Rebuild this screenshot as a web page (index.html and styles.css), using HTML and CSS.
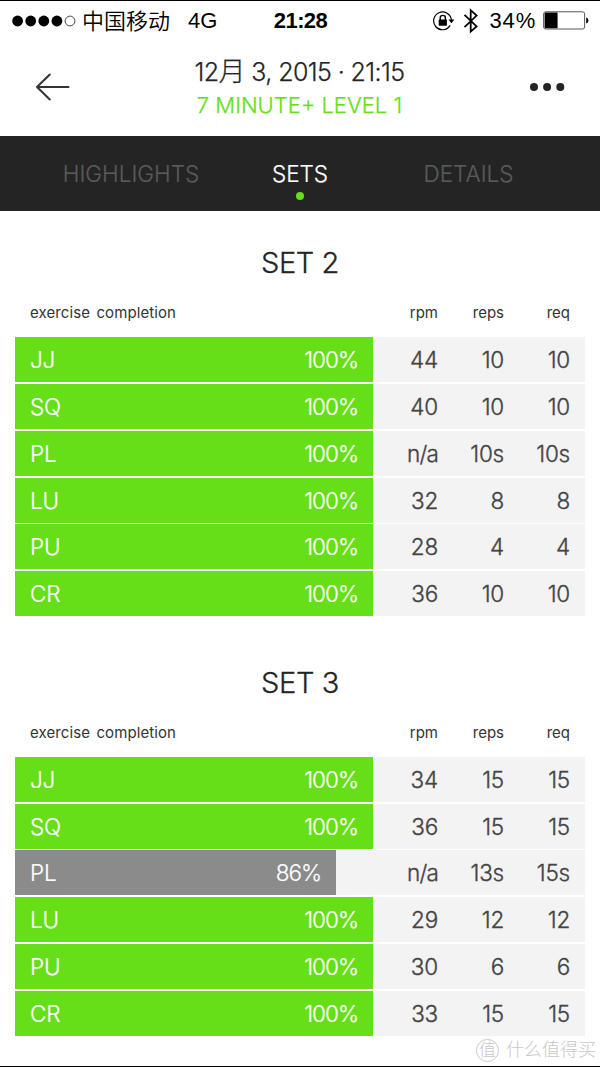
FILE: index.html
```html
<!DOCTYPE html>
<html lang="en">
<head>
    <meta charset="utf-8">
    <title>Workout sets</title>
    <link rel="stylesheet" href="styles.css">
</head>

<body>
    <div class="status">
        <div class="status-left">
            <svg class="signal" width="64" height="12" viewBox="0 0 64 12">
                <circle cx="5.6" cy="6" r="5.4"/>
                <circle cx="18.7" cy="6" r="5.4"/>
                <circle cx="31.8" cy="6" r="5.4"/>
                <circle cx="44.9" cy="6" r="5.4"/>
                <circle cx="58" cy="6" r="4.9" fill="none" stroke="#333" stroke-width="0.9"/>
            </svg>
            <span class="carrier">中国移动</span>
            <span class="network">4G</span>
        </div>
        <div class="clock">21:28</div>
        <div class="status-right">
            <svg class="lock" width="22" height="20" viewBox="0 0 22 20">
                <path d="M17.2 14.4A8.9 8.9 0 1 1 18.4 9" fill="none" stroke="#000" stroke-width="1.2"/>
                <path d="M15.4 8.6h6l-3 3.6z"/>
                <path d="M7.2 9V7a2.6 2.6 0 0 1 5.2 0v2" fill="none" stroke="#000" stroke-width="1.4"/>
                <rect x="5.7" y="8.5" width="8.2" height="6.2" rx="0.6"/>
            </svg>
            <svg class="bluetooth" width="16" height="26" viewBox="0 0 16 26">
                <path d="M1.5 6.8L13.6 18.4L7.7 23.6V2.2L13.6 7.6L1.5 19.2" fill="none" stroke="#000" stroke-width="1.8"/>
            </svg>
            <span class="percent">34%</span>
            <svg class="battery" width="46" height="19" viewBox="0 0 46 19">
                <rect x="0.6" y="0.8" width="41" height="17.2" rx="2" fill="none" stroke="#444" stroke-width="0.9"/>
                <rect x="1.6" y="1.6" width="13" height="15.6" rx="0.8"/>
                <path d="M43.2 6.5q2.2 0.6 2.2 3t-2.2 3z"/>
            </svg>
        </div>
    </div>

    <div class="header">
        <svg class="back" width="35" height="28" viewBox="0 0 35 28">
            <path d="M33.5 14H2M14.8 1.5L2 14l12.8 12.5" fill="none" stroke="#333" stroke-width="2" stroke-linecap="round" stroke-linejoin="round"/>
        </svg>
        <div class="title">
            <div class="date">12<span class="month">月</span> 3, 2015 · 21:15</div>
            <div class="workout">7 MINUTE+ LEVEL 1</div>
        </div>
        <svg class="more" width="36" height="10" viewBox="0 0 36 10">
            <circle cx="5" cy="5" r="4"/>
            <circle cx="18.1" cy="5" r="4"/>
            <circle cx="31.3" cy="5" r="4"/>
        </svg>
    </div>

    <div class="tabs">
        <div class="tab highlights"><span>HIGHLIGHTS</span></div>
        <div class="tab sets active"><span>SETS</span></div>
        <div class="tab details"><span>DETAILS</span></div>
    </div>

    <div class="set">
        <h2>SET 2</h2>
        <div class="labels"><span class="completion">exercise completion</span><span>rpm</span><span>reps</span><span>req</span></div>
        <div class="rows">
            <div class="row"><div class="track"><div class="bar"><span>JJ</span><span class="pct">100%</span></div></div><span>44</span><span>10</span><span>10</span></div>
            <div class="row"><div class="track"><div class="bar"><span>SQ</span><span class="pct">100%</span></div></div><span>40</span><span>10</span><span>10</span></div>
            <div class="row"><div class="track"><div class="bar"><span>PL</span><span class="pct">100%</span></div></div><span class="na">n/a</span><span>10s</span><span>10s</span></div>
            <div class="row"><div class="track"><div class="bar"><span>LU</span><span class="pct">100%</span></div></div><span>32</span><span>8</span><span>8</span></div>
            <div class="row"><div class="track"><div class="bar"><span>PU</span><span class="pct">100%</span></div></div><span>28</span><span>4</span><span>4</span></div>
            <div class="row"><div class="track"><div class="bar"><span>CR</span><span class="pct">100%</span></div></div><span>36</span><span>10</span><span>10</span></div>
        </div>
    </div>

    <div class="set">
        <h2>SET 3</h2>
        <div class="labels"><span class="completion">exercise completion</span><span>rpm</span><span>reps</span><span>req</span></div>
        <div class="rows">
            <div class="row"><div class="track"><div class="bar"><span>JJ</span><span class="pct">100%</span></div></div><span>34</span><span>15</span><span>15</span></div>
            <div class="row"><div class="track"><div class="bar"><span>SQ</span><span class="pct">100%</span></div></div><span>36</span><span>15</span><span>15</span></div>
            <div class="row"><div class="track"><div class="bar partial" style="width: 89.7%"><span>PL</span><span class="pct">86%</span></div></div><span class="na">n/a</span><span>13s</span><span>15s</span></div>
            <div class="row"><div class="track"><div class="bar"><span>LU</span><span class="pct">100%</span></div></div><span>29</span><span>12</span><span>12</span></div>
            <div class="row"><div class="track"><div class="bar"><span>PU</span><span class="pct">100%</span></div></div><span>30</span><span>6</span><span>6</span></div>
            <div class="row"><div class="track"><div class="bar"><span>CR</span><span class="pct">100%</span></div></div><span>33</span><span>15</span><span>15</span></div>
        </div>
    </div>

    <div class="watermark"><span class="stamp">值</span><span>什么值得买</span></div>
</body>
</html>
```

FILE: styles.css
```css
* {
    box-sizing: border-box;
}

body {
    position: relative;
    margin: 0;
    height: 1067px;
    overflow: hidden;
    background-color: #fff;
    border-top: 1px solid #000;
    border-bottom: 1px solid #000;
    font-family: Inter, "Noto Sans CJK SC", sans-serif;
    font-weight: 300;
    color: #242424;
}

/* phone status bar */
.status {
    display: grid;
    grid-template-columns: 1fr 60px 1fr;
    align-items: center;
    height: 38px;
    padding: 0 11px 0 12px;
    font-family: "Liberation Sans", "Noto Sans CJK SC", sans-serif;
    font-size: 22px;
    font-weight: 400;
    line-height: 38px;
    color: #000;
}

.status-left,
.status-right {
    display: flex;
    align-items: center;
}

.status-right {
    justify-content: flex-end;
}

.carrier {
    margin: -4px 0 0 6px;
    font-family: "Noto Sans CJK SC", sans-serif;
    font-weight: 350;
}

.network {
    margin: 1px 0 0 18px;
}

.clock {
    padding-top: 1px;
    font-weight: 700;
    text-align: center;
    letter-spacing: -0.6px;
}

.bluetooth {
    margin-left: 8px;
}

.percent {
    margin: 1px 7px 0 11px;
    letter-spacing: 0.8px;
}

.header {
    display: flex;
    justify-content: space-between;
    align-items: center;
    height: 97px;
    padding: 0 35px;
}

.back,
.more {
    margin-bottom: 2px;
}

.more {
    fill: #242424;
}

.title {
    text-align: center;
    -webkit-text-stroke: 0.25px;
}

.date {
    height: 33px;
    padding-top: 1px;
    font-size: 25px;
    line-height: 33px;
    letter-spacing: -0.6px;
}

.month {
    font-size: 27px;
    line-height: 1;
}

.workout {
    height: 32px;
    padding-top: 1px;
    font-size: 22px;
    line-height: 32px;
    color: #66df18;
}

.tabs {
    display: grid;
    grid-template-columns: 262px 76px 262px;
    height: 74.5px;
    background-color: #242424;
    font-size: 22.5px;
    line-height: 75px;
    text-align: center;
    color: #5a5a5a;
    -webkit-text-stroke: 0.2px;
}

.active {
    position: relative;
    color: #fff;
}

.active::after {
    content: "";
    position: absolute;
    left: 34px;
    top: 56px;
    width: 8px;
    height: 8px;
    border-radius: 50%;
    background-color: #66df18;
}

.details {
    padding-right: 1px;
}

.set {
    height: 419.6px;
    padding: 30.8px 15px 0;
}

.set h2 {
    margin: 0;
    font-size: 29px;
    font-weight: 300;
    line-height: 44px;
    text-align: center;
    letter-spacing: -0.4px;
    -webkit-text-stroke: 0.3px;
}

.labels {
    display: grid;
    grid-template-columns: 357px 66px 66px 66px;
    height: 52px;
    padding-right: 15px;
    font-size: 15px;
    font-weight: 400;
    line-height: 56px;
    text-align: right;
    color: #333;
}

.completion {
    padding-left: 15px;
    text-align: left;
    letter-spacing: 0.1px;
    word-spacing: 2px;
}

.rows {
    display: flex;
    flex-direction: column;
    gap: 1.8px;
}

.row {
    display: grid;
    grid-template-columns: 357px 66px 66px 66px;
    height: 45px;
    padding-right: 15px;
    background-color: #f3f3f3;
    font-size: 22.5px;
    line-height: 45.6px;
    text-align: right;
    letter-spacing: -0.2px;
    color: #444;
    -webkit-text-stroke: 0.35px;
}

.track {
    width: 358px;
}

.bar {
    display: flex;
    justify-content: space-between;
    height: 45px;
    padding: 0 15px;
    background-color: #66df18;
    color: #fff;
    -webkit-text-stroke: 0.2px;
}

.pct {
    letter-spacing: -1px;
}

.na {
    letter-spacing: -0.8px;
}

.partial {
    background-color: #8b8b8b;
}

.watermark {
    position: absolute;
    right: 4px;
    bottom: 4px;
    display: flex;
    align-items: center;
    gap: 7px;
    font-size: 18px;
    line-height: 24px;
    color: #c8c8c8;
}

.stamp {
    width: 23px;
    height: 23px;
    border: 1px solid #c8c8c8;
    border-radius: 50%;
    font-size: 17px;
    line-height: 20px;
    text-align: center;
}
```
